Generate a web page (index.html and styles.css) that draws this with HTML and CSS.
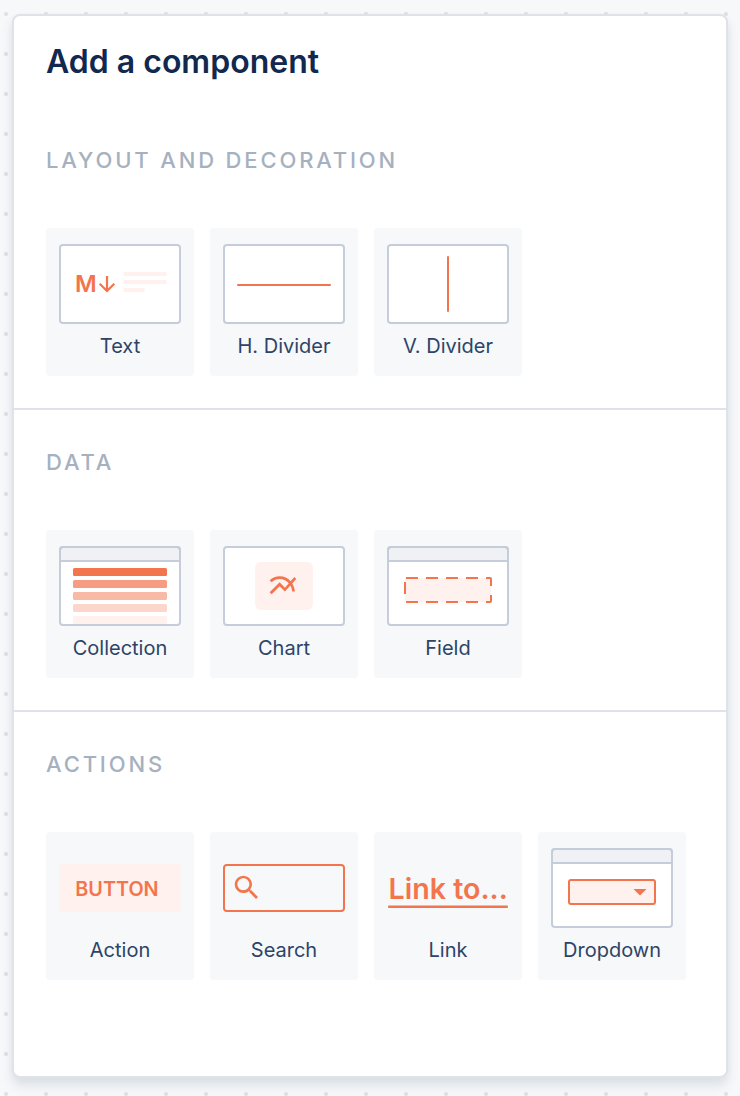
FILE: index.html
```html
<!DOCTYPE html>
<html lang="en">
<head>
<meta charset="utf-8">
<title>Add a component</title>
<link rel="stylesheet" href="styles.css">
</head>
<body>
<main class="panel">
  <h1 class="title">Add a component</h1>
  <section class="group">
    <h2 class="heading">LAYOUT AND DECORATION</h2>
    <div class="cards">
      <div class="card">
        <svg class="art" viewBox="0 0 124 80">
          <rect class="frame" x="2" y="1" width="120" height="78" rx="3"/>
          <text class="md" x="17" y="48">M</text>
          <path class="arrow" d="M49 32V47M41.700 39.700L49 47L56.300 39.700"/>
          <path class="faint" d="M67 30H107M67 38H107M67 46H85"/>
        </svg>
        <span class="label">Text</span>
      </div>
      <div class="card">
        <svg class="art" viewBox="0 0 124 80">
          <rect class="frame" x="2" y="1" width="120" height="78" rx="3"/>
          <path class="line round" d="M16 41H108"/>
        </svg>
        <span class="label">H. Divider</span>
      </div>
      <div class="card">
        <svg class="art" viewBox="0 0 124 80">
          <rect class="frame" x="2" y="1" width="120" height="78" rx="3"/>
          <path class="line round" d="M62 13V67"/>
        </svg>
        <span class="label">V. Divider</span>
      </div>
    </div>
  </section>
  <section class="group">
    <h2 class="heading">DATA</h2>
    <div class="cards">
      <div class="card">
        <svg class="art" viewBox="0 0 124 80">
          <rect class="white" x="2" y="1" width="120" height="78" rx="3"/>
          <path class="bar" d="M2 15V4Q2 1 5 1H119Q122 1 122 4V15Z"/>
          <rect x="15" y="22" width="94" height="8" rx="1.500" fill="#f2754e"/>
          <rect x="15" y="34" width="94" height="8" rx="1.500" fill="#f79c83"/>
          <rect x="15" y="46" width="94" height="8" rx="1.500" fill="#f9b9a7"/>
          <rect x="15" y="58" width="94" height="8" rx="1.500" fill="#fcd6cb"/>
          <path d="M15 79V71.500Q15 70 16.500 70H107.500Q109 70 109 71.500V79Z" fill="#fff1ee"/>
          <rect class="outline" x="2" y="1" width="120" height="78" rx="3"/>
        </svg>
        <span class="label">Collection</span>
      </div>
      <div class="card">
        <svg class="art" viewBox="0 0 124 80">
          <rect class="frame" x="2" y="1" width="120" height="78" rx="3"/>
          <rect class="tint" x="33" y="16" width="58" height="48" rx="6"/>
          <path class="solid" transform="translate(45 23.700) scale(1.330)" d="M22 6.920l-1.410-1.410-2.850 3.210C15.680 6.400 12.830 5 9.610 5 6.720 5 4.070 6.160 2 8l1.420 1.420C5.120 7.930 7.270 7 9.610 7c2.740 0 5.090 1.260 6.770 3.240l-2.880 3.240-4-4L2 16.990l1.500 1.500 6-6.010 4 4 4.050-4.550c.75 1.350 1.250 2.900 1.440 4.550H21c-.22-2.300-.95-4.390-2.040-6.140L22 6.920z"/>
        </svg>
        <span class="label">Chart</span>
      </div>
      <div class="card">
        <svg class="art" viewBox="0 0 124 80">
          <rect class="white" x="2" y="1" width="120" height="78" rx="3"/>
          <path class="bar" d="M2 15V4Q2 1 5 1H119Q122 1 122 4V15Z"/>
          <rect class="outline" x="2" y="1" width="120" height="78" rx="3"/>
          <rect class="tint" x="19" y="32" width="86" height="24" rx="1"/>
          <path class="line" d="M20 32H32M40 32H52M60 32H72M80 32H92M100 32H104Q105 32 105 33V40M105 49V55Q105 56 104 56H100M92 56H80M72 56H60M52 56H40M32 56H20M19 48V36"/>
        </svg>
        <span class="label">Field</span>
      </div>
    </div>
  </section>
  <section class="group">
    <h2 class="heading">ACTIONS</h2>
    <div class="cards">
      <div class="card">
        <svg class="art" viewBox="0 0 124 80">
          <rect class="tint" x="1" y="16" width="122" height="48" rx="4"/>
          <text class="button-text" x="17.300" y="48">BUTTON</text>
        </svg>
        <span class="label">Action</span>
      </div>
      <div class="card">
        <svg class="art" viewBox="0 0 124 80">
          <rect class="line" x="2" y="17" width="120" height="46" rx="3"/>
          <path class="solid" transform="translate(8.700 23.700) scale(1.333)" d="M15.500 14h-.79l-.28-.27A6.471 6.471 0 0 0 16 9.500 6.500 6.500 0 1 0 9.500 16c1.610 0 3.090-.59 4.230-1.570l.27.28v.79l5 4.990L20.490 19l-4.990-5zm-6 0C7.010 14 5 11.990 5 9.500S7.010 5 9.500 5 14 7.010 14 9.500 11.990 14 9.500 14z"/>
        </svg>
        <span class="label">Search</span>
      </div>
      <div class="card">
        <svg class="art" viewBox="0 0 124 80">
          <text class="link-text" x="2.600" y="51.300">Link to...</text>
          <path class="underline" d="M2.200 58.800H121.800"/>
        </svg>
        <span class="label">Link</span>
      </div>
      <div class="card">
        <svg class="art" viewBox="0 0 124 80">
          <rect class="white" x="2" y="1" width="120" height="78" rx="3"/>
          <path class="bar" d="M2 15V4Q2 1 5 1H119Q122 1 122 4V15Z"/>
          <rect class="outline" x="2" y="1" width="120" height="78" rx="3"/>
          <rect class="line select" x="19" y="32" width="86" height="24" rx="2"/>
          <path class="solid" d="M83.500 41H96.500L90 47.500Z"/>
        </svg>
        <span class="label">Dropdown</span>
      </div>
    </div>
  </section>
</main>
</body>
</html>
```

FILE: styles.css
```css
* { box-sizing: border-box; }

body {
  margin: 0;
  padding: 14px 12px 18px;
  height: 1096px;
  overflow: hidden;
  font-family: Inter, "Liberation Sans", sans-serif;
  background: #f7f8fa radial-gradient(circle at 20px 20px, #dfe2e8 1.6px, rgba(223, 226, 232, 0) 2.4px) -14px -6px / 40px 40px;
}

.panel {
  height: 1064px;
  background: #fff;
  border: 2px solid #dfe2e8;
  border-radius: 8px;
  box-shadow: 0 8px 12px rgba(50, 70, 100, .12), 0 2px 6px rgba(50, 70, 100, .04);
}

.title {
  margin: 0;
  padding: 26px 32px 0;
  height: 92px;
  font-size: 32px;
  line-height: 40px;
  font-weight: 600;
  color: #11284f;
}

.group {
  height: 302px;
  padding: 36px 32px 0;
  border-bottom: 2px solid #dfe2e8;
}

.group:last-child { border-bottom: 0; }

.heading {
  margin: 0 0 52px;
  font-size: 22px;
  line-height: 32px;
  font-weight: 500;
  letter-spacing: 2.85px;
  color: #a5b1bf;
}

.cards { display: flex; gap: 16px; }

.card {
  width: 148px;
  height: 148px;
  padding-top: 16px;
  display: flex;
  flex-direction: column;
  align-items: center;
  background: #f6f8fa;
  border-radius: 4px;
}

.art { display: block; width: 124px; height: 80px; flex: none; }

.label {
  margin-top: 6px;
  font-size: 20px;
  line-height: 32px;
  color: #2d4468;
  white-space: nowrap;
}

.frame { fill: #fff; stroke: #c6cdda; stroke-width: 2; }
.white { fill: #fff; }
.outline { fill: none; stroke: #c6cdda; stroke-width: 2; }
.bar { fill: #eff1f4; stroke: #c6cdda; stroke-width: 2; }
.line { fill: none; stroke: #f2754e; stroke-width: 2; }
.round { stroke-linecap: round; }
.arrow { fill: none; stroke: #f2754e; stroke-width: 2.2; }
.faint { fill: none; stroke: #fff1ee; stroke-width: 4; stroke-linecap: round; }
.tint, .select { fill: #fff1ee; }
.solid { fill: #f2754e; }
.underline { stroke: #f2754e; stroke-width: 2.5; }

.md, .button-text, .link-text { fill: #f2754e; font-weight: 600; }
.md { font-size: 23.5px; }
.button-text { font-size: 19.8px; }
.link-text { font-size: 28.6px; }
```
